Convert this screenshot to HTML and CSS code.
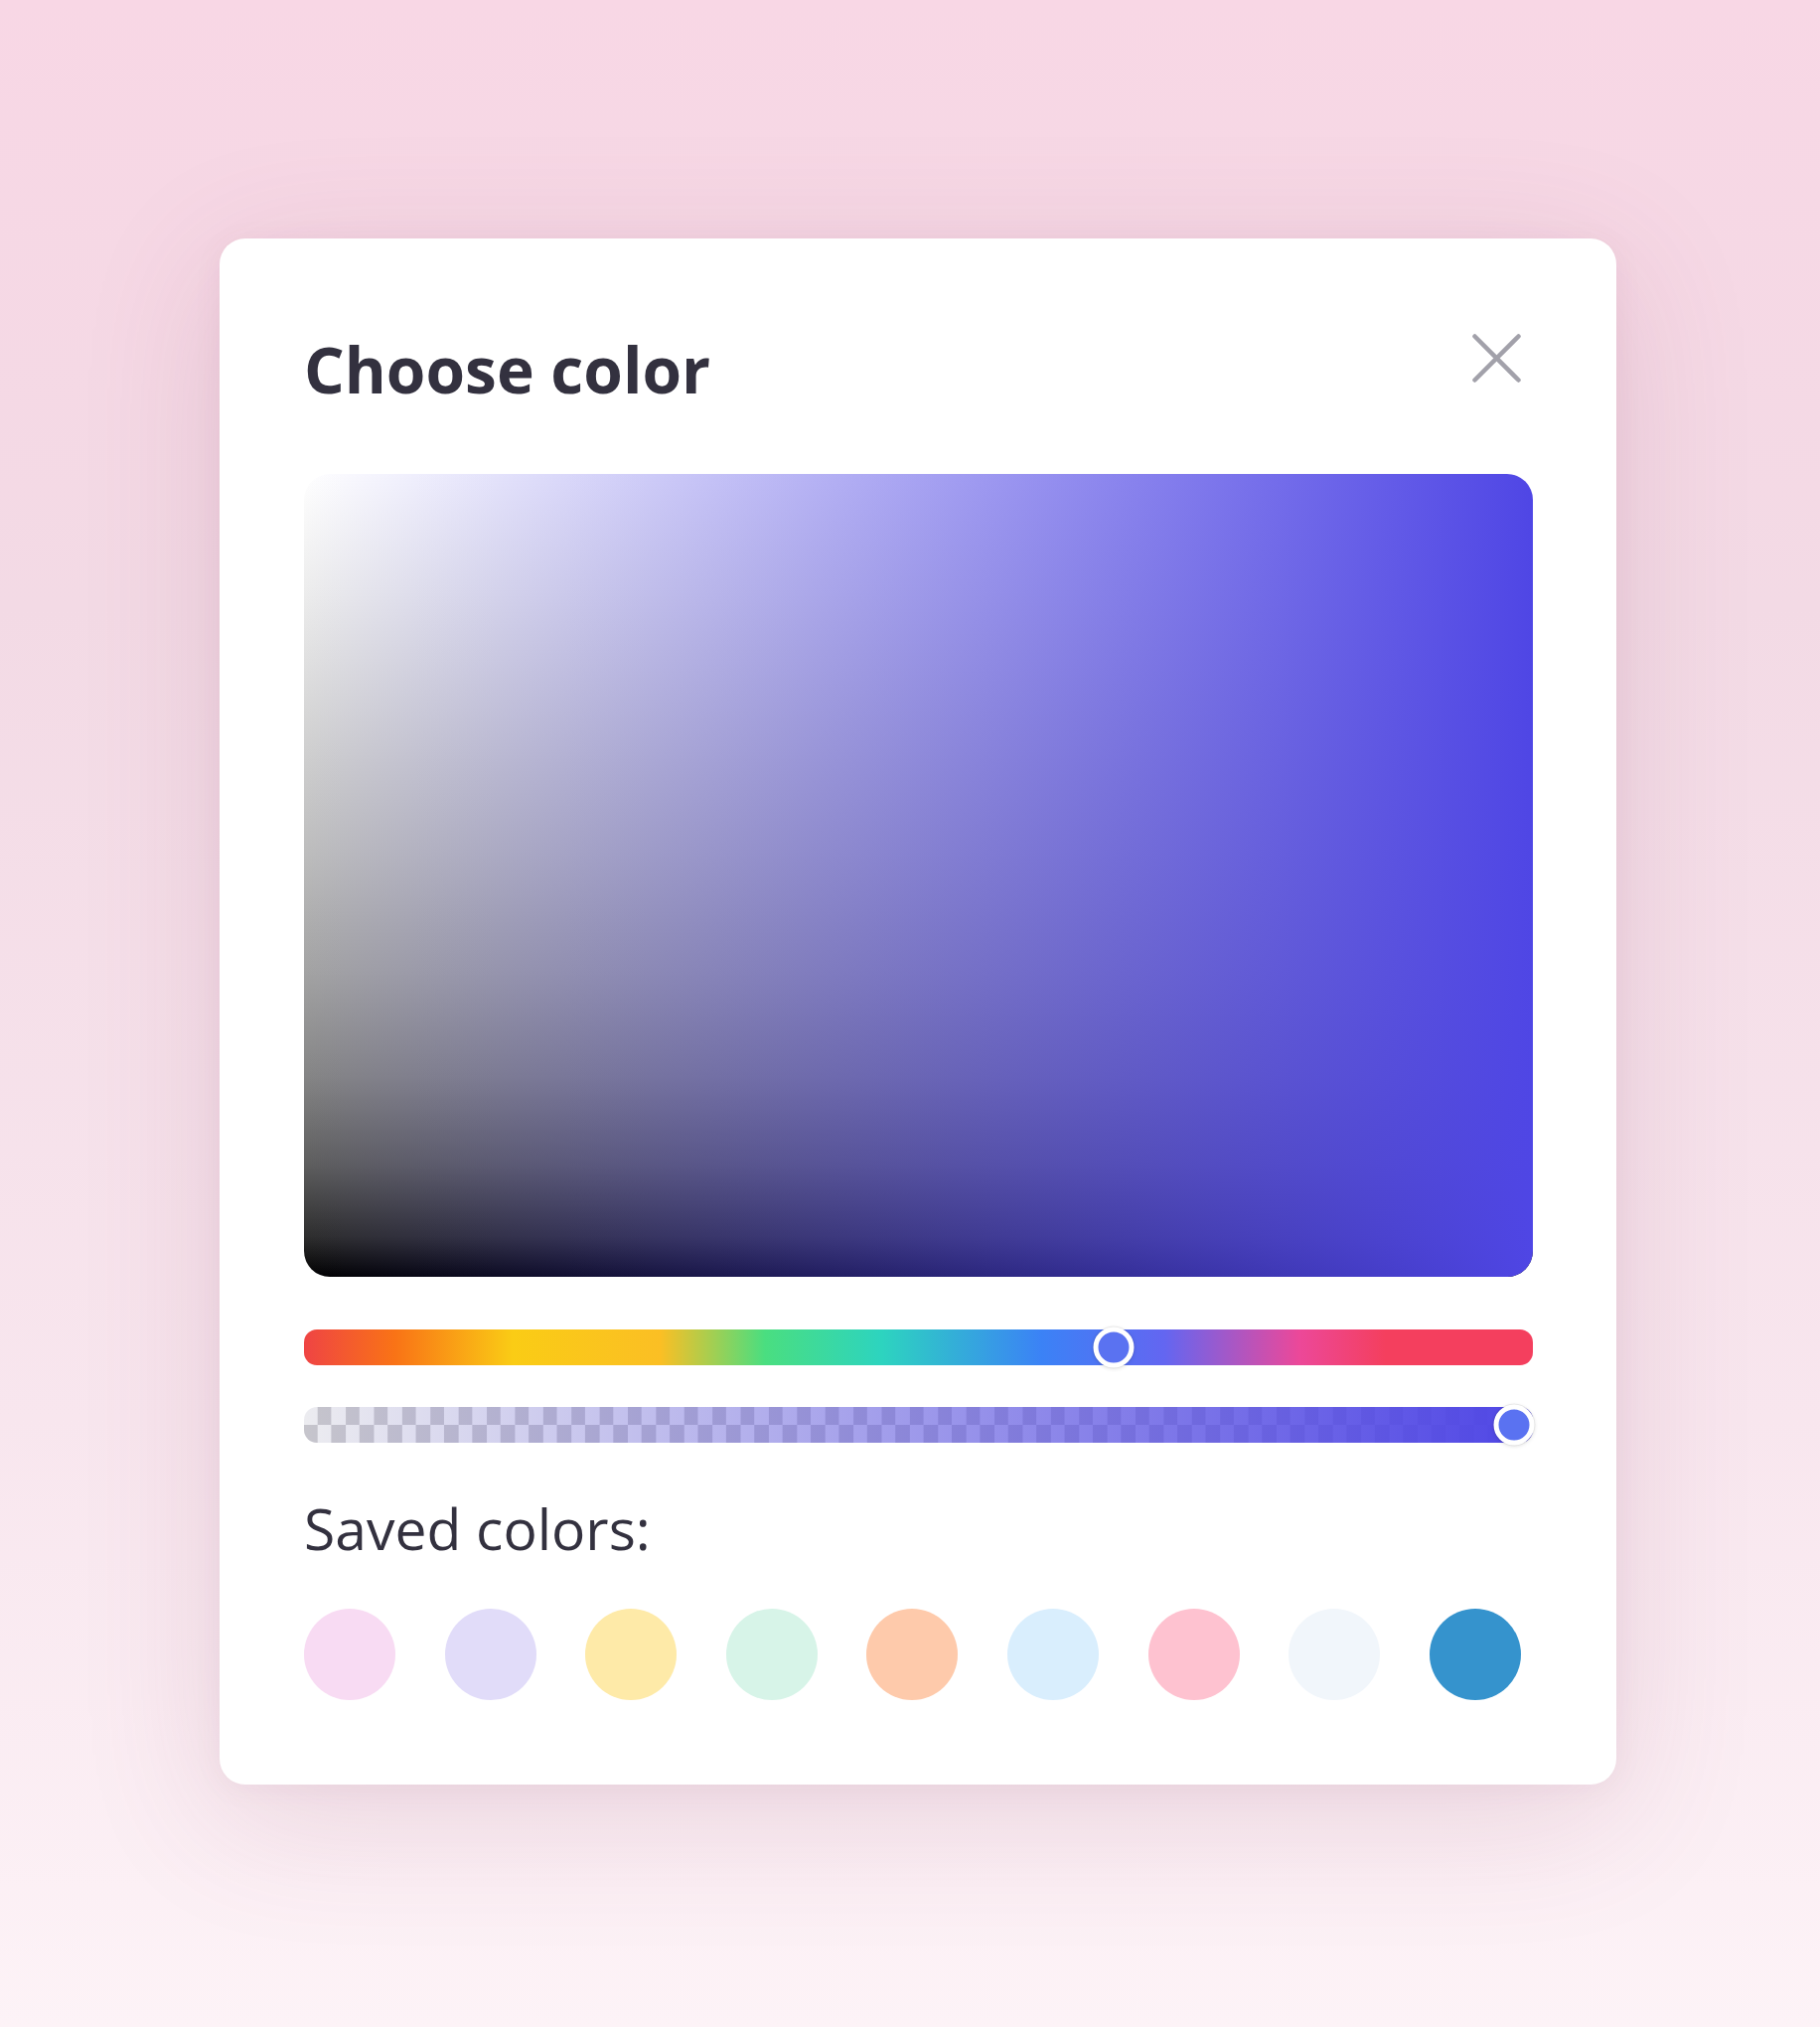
FILE: index.html
```html
<!DOCTYPE html>
<html lang="en">
<head>
<meta charset="utf-8">
<title>Choose color</title>
<link rel="stylesheet" href="styles.css">
</head>
<body>
<div class="page">
  <div class="dialog">
    <div class="header">
      <h1 class="title">Choose color</h1>
      <button class="close" aria-label="Close">
        <svg width="49" height="49" viewBox="0 0 49 49"><path d="M2.5 2.5 L46.5 46.5 M46.5 2.5 L2.5 46.5" stroke="#a2a1aa" stroke-width="4.5" stroke-linecap="round" fill="none"/></svg>
      </button>
    </div>
    <div class="sv-area"><div class="sv-tint"></div></div>
    <div class="slider hue"><span class="thumb" style="left: 65.85%"></span></div>
    <div class="slider alpha"><div class="alpha-fill"></div><span class="thumb" style="left: 98.5%"></span></div>
    <p class="saved-label">Saved colors:</p>
    <div class="swatches">
      <span class="swatch s1"></span>
      <span class="swatch s2"></span>
      <span class="swatch s3"></span>
      <span class="swatch s4"></span>
      <span class="swatch s5"></span>
      <span class="swatch s6"></span>
      <span class="swatch s7"></span>
      <span class="swatch s8"></span>
      <span class="swatch s9"></span>
    </div>
  </div>
</div>
</body>
</html>
```
FILE: styles.css
```css
* { box-sizing: border-box; }
html, body { margin: 0; padding: 0; }
body {
  font-family: "Open Sans", "Noto Sans", sans-serif;
  background: linear-gradient(to bottom, #f8d7e5 0%, #f3dae5 30%, #f8e6ee 70%, #fdf3f7 100%);
  min-height: 2040px;
}
.page {
  display: flex;
  justify-content: center;
  align-items: flex-start;
  padding: 240px 0 0 16px;
  min-height: 2040px;
}
.dialog {
  width: 1406px;
  background: #fff;
  border-radius: 26px;
  padding: 85px 84px 85px 85px;
  box-shadow: 0 30px 140px rgba(140, 70, 105, 0.16), 0 4px 30px rgba(140, 70, 105, 0.06);
}
.header {
  display: flex;
  justify-content: space-between;
  align-items: flex-start;
  margin-bottom: 58px;
}
.title {
  margin: 0;
  font-size: 64px;
  line-height: 94px;
  font-weight: 700;
  color: #33313f;
  letter-spacing: 0;
}
.close {
  width: 49px;
  height: 49px;
  padding: 0;
  margin: 11px 12px 0 0;
  border: 0;
  background: none;
  display: flex;
}
.sv-area {
  position: relative;
  height: 808px;
  border-radius: 26px;
  overflow: hidden;
  background: linear-gradient(to bottom, #ffffff 0%, #ececec 15%, #d6d6d6 30%, #bdbdbd 47%, #a3a3a3 62%, #858585 75%, #5e5e5e 86%, #2e2e2e 95%, #000000 100%);
}
.sv-tint {
  position: absolute;
  inset: 0;
  background: linear-gradient(to right, rgba(79, 70, 229, 0) 0%, rgba(79, 70, 229, 1) 100%);
}
.slider {
  position: relative;
  height: 36px;
  border-radius: 13px;
}
.hue {
  margin-top: 53px;
  background: linear-gradient(to right,
    #ef4444 0%,
    #f97316 7.4%,
    #facc15 17%,
    #fbbf24 29%,
    #4ade80 37.5%,
    #2dd4bf 47%,
    #3b82f6 60%,
    #6366f1 70%,
    #ec4899 81%,
    #f43f5e 88%,
    #f43f5e 100%);
}
.alpha {
  margin-top: 42px;
  background: conic-gradient(#c6c5cc 0 25%, #ececf0 0 50%, #c6c5cc 0 75%, #ececf0 0) -1px 0 / 28.4px 36px;
}
.alpha-fill {
  position: absolute;
  inset: 0;
  border-radius: 13px;
  background: linear-gradient(to right, rgba(79, 70, 229, 0) 0%, rgba(79, 70, 229, 1) 100%);
}
.thumb {
  position: absolute;
  top: 50%;
  width: 41px;
  height: 41px;
  border-radius: 50%;
  border: 5px solid #fff;
  background: #5a72f1;
  transform: translate(-50%, -50%);
  box-shadow: 0 0 0 1px rgba(0, 0, 0, 0.06), 0 1px 4px rgba(0, 0, 0, 0.12);
}
.saved-label {
  margin: 51px 0 0;
  font-size: 57px;
  line-height: 70px;
  font-weight: 400;
  color: #33313f;
}
.swatches {
  display: flex;
  gap: 49.6px;
  margin-top: 46px;
}
.swatch {
  width: 92px;
  height: 92px;
  border-radius: 50%;
  flex: none;
}
.s1 { background: #f8dbf3; }
.s2 { background: #e1dcf9; }
.s3 { background: #feeaa8; }
.s4 { background: #d7f4e8; }
.s5 { background: #fecaab; }
.s6 { background: #d9eefd; }
.s7 { background: #fec2d0; }
.s8 { background: #f1f6fb; }
.s9 { background: #3593cd; }
```
